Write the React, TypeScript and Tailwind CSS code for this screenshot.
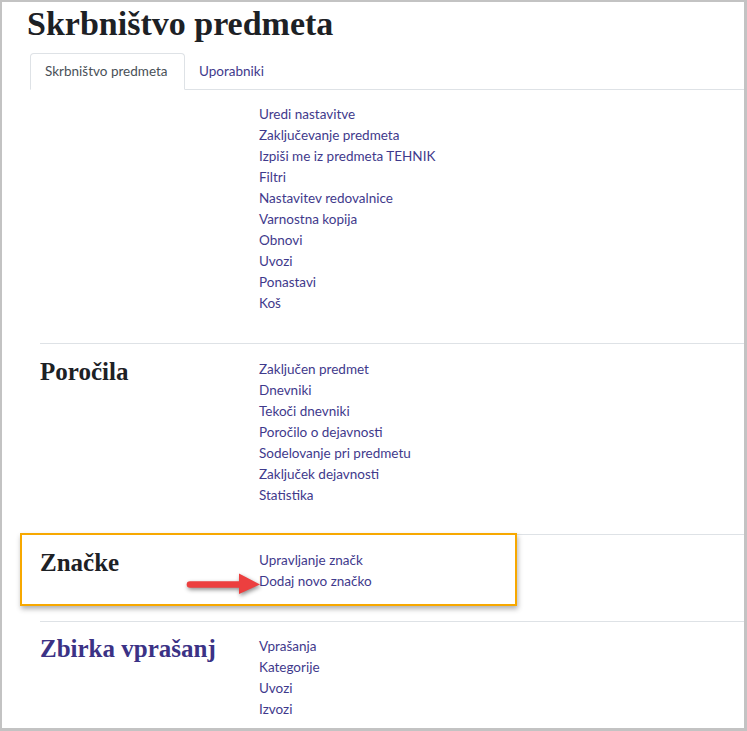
const serif = { fontFamily: '"Liberation Serif", "Times New Roman", serif' };

const sections = [
  {
    title: "",
    links: [
      "Uredi nastavitve",
      "Zaključevanje predmeta",
      "Izpiši me iz predmeta TEHNIK",
      "Filtri",
      "Nastavitev redovalnice",
      "Varnostna kopija",
      "Obnovi",
      "Uvozi",
      "Ponastavi",
      "Koš",
    ],
  },
  {
    title: "Poročila",
    links: [
      "Zaključen predmet",
      "Dnevniki",
      "Tekoči dnevniki",
      "Poročilo o dejavnosti",
      "Sodelovanje pri predmetu",
      "Zaključek dejavnosti",
      "Statistika",
    ],
  },
  { title: "Značke", links: ["Upravljanje značk", "Dodaj novo značko"] },
  {
    title: "Zbirka vprašanj",
    link: true,
    links: ["Vprašanja", "Kategorije", "Uvozi", "Izvozi"],
  },
];

function Arrow() {
  return (
    <svg
      width="80"
      height="32"
      viewBox="0 0 80 32"
      className="absolute left-[181px] top-[566px]"
      style={{ filter: "drop-shadow(1px 2px 2px rgba(0,0,0,0.45))" }}
    >
      <path d="M7 13.2 H60 V19.8 H7 A3.3 3.3 0 0 1 7 13.2 Z" fill="#ec3f3f" />
      <polygon points="56,5.5 77,16.5 56,26" fill="#ec3f3f" />
    </svg>
  );
}

export default function App() {
  return (
    <div
      className="relative w-[747px] h-[731px] overflow-hidden bg-white border-l-2 border-t-2 border-r-[3px] border-b-[3px] border-[#c3c3c3]"
      style={{ fontFamily: 'Lato, "Open Sans", sans-serif' }}
    >
      <h1
        className="pl-[25px] mt-[2px] mb-[9px] text-[34px] leading-[40px] font-bold text-[#1d2125]"
        style={serif}
      >
        Skrbništvo predmeta
      </h1>

      {/* zavihki */}
      <div className="ml-[28px] flex border-b border-[#dee2e6] text-[13.5px]">
        <div className="-mb-px h-[37px] w-[155px] flex items-center px-[14px] border border-[#dee2e6] border-b-white rounded-t-[4px] bg-white text-[#495057]">
          Skrbništvo predmeta
        </div>
        <div className="h-[36px] flex items-center px-[14px] text-[#3f3a8c]">
          Uporabniki
        </div>
      </div>

      <div className="ml-[38px]">
        {sections.map((s, i) => (
          <div
            key={i}
            className={
              "flex " +
              (i === 1 ? "pb-[28px] " : "pb-[29px] ") +
              (i === 0
                ? "pt-[10px]"
                : i === 3
                  ? "pt-[10px] border-t border-[#dee2e6]"
                  : "pt-[11px] border-t border-[#dee2e6]")
            }
          >
            <div className="w-[219px] shrink-0 pt-[2px]">
              {s.title && (
                <h3
                  className={
                    "text-[25px] leading-[30px] font-bold " +
                    (s.link ? "text-[#3b3285]" : "text-[#1d2125]")
                  }
                  style={serif}
                >
                  {s.title}
                </h3>
              )}
            </div>
            <ul className="pt-[4px] text-[13.5px] leading-[21px] text-[#3f3a8c]">
              {s.links.map((l) => (
                <li key={l}>{l}</li>
              ))}
            </ul>
          </div>
        ))}
      </div>

      {/* označba */}
      <div className="absolute left-[18px] top-[531px] w-[497px] h-[73px] border-2 border-[#f7a800] shadow-[1px_3px_5px_rgba(0,0,0,0.3)]" />
      <Arrow />
    </div>
  );
}
